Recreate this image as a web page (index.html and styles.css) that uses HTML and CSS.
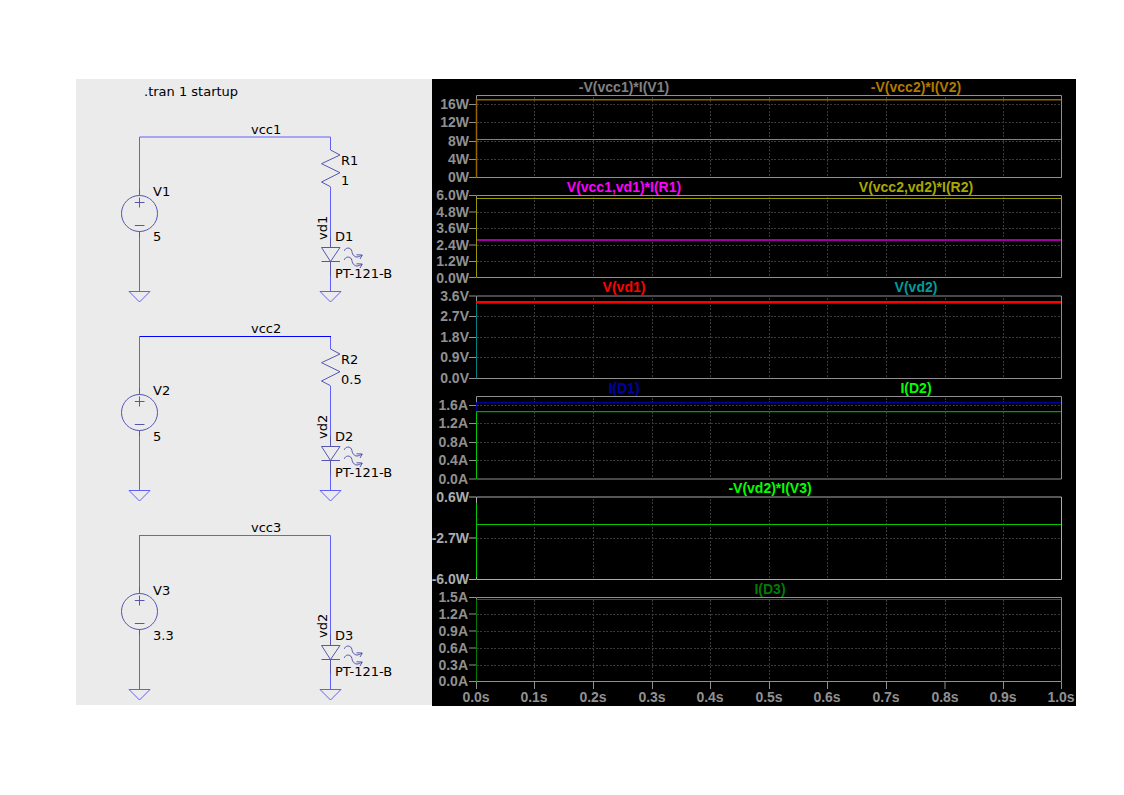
FILE: index.html
```html
<!DOCTYPE html>
<html lang="en">
<head>
<meta charset="utf-8">
<title>LED supply simulation</title>
<link rel="stylesheet" href="styles.css">
</head>
<body>
<main class="board">
  <section class="schematic" aria-label="Schematic">
    <svg class="drawing" viewBox="0 0 356 626">
      <defs>
        <g id="ground"><path class="wire" d="M-10.5 0H10.5L0 10.5Z"/></g>
        <g id="source">
          <path class="wire" d="M63.5 58V116.5M63.5 152.5V212.5"/>
          <circle class="part" cx="63.5" cy="134.5" r="18"/>
          <path class="part" d="M58.8 123.5H68.5M63.5 118.5V128.5M58.8 146.5H68.5"/>
          <use href="#ground" x="63.5" y="212.5"/>
          <path class="part" d="M63.5 110V116.5M63.5 152.5V158"/>
        </g>
        <g id="resistor"><path class="part" d="M254.5 71L264 76L245.5 84.7L264 93.7L245.5 103L254.5 107.7"/></g>
        <g id="ray">
          <path class="part" d="M268.3 171.8C269.5 168.4 274 168.2 275.4 171C276.4 173 275.8 174.4 277.5 176.2C279.5 178.8 282 178.4 286 176.2M280.5 175.8L286.3 176L284 180"/>
        </g>
        <g id="led">
          <path class="part" d="M245.5 168.5H264L254.5 182.5ZM245.5 182.5H264M254.5 158V168.5M254.5 182.5V197"/>
          <path class="wire" d="M254.5 197V212.5"/>
          <use href="#ground" x="254.5" y="212.5"/>
          <use href="#ray"/>
          <use href="#ray" y="9"/>
        </g>
      </defs>

      <text x="68" y="17">.tran 1 startup</text>

      <path class="wire" d="M63.5 58H254.5V71M254.5 108V158"/>
      <use href="#source"/><use href="#resistor"/><use href="#led"/>
      <text x="175" y="55">vcc1</text>
      <text x="77" y="117">V1</text>
      <text x="77" y="162">5</text>
      <text x="265" y="86">R1</text>
      <text x="265" y="106">1</text>
      <text x="259" y="162">D1</text>
      <text x="259" y="199">PT-121-B</text>
      <text transform="translate(251 161) rotate(-90)">vd1</text>

      <path class="wire" d="M254.5 257V270M254.5 307V357"/>
      <path class="wire strong" d="M63 257.5H255"/>
      <use href="#source" y="199"/><use href="#resistor" y="199"/><use href="#led" y="199"/>
      <text x="175" y="254">vcc2</text>
      <text x="77" y="316">V2</text>
      <text x="77" y="362">5</text>
      <text x="265" y="285">R2</text>
      <text x="265" y="305">0.5</text>
      <text x="259" y="362">D2</text>
      <text x="259" y="398">PT-121-B</text>
      <text transform="translate(251 360) rotate(-90)">vd2</text>

      <path class="wire" d="M63.5 457V456.5H254.5V556"/>
      <use href="#source" y="398"/><use href="#led" y="398"/>
      <text x="175" y="453">vcc3</text>
      <text x="77" y="516">V3</text>
      <text x="77" y="561">3.3</text>
      <text x="259" y="561">D3</text>
      <text x="259" y="597">PT-121-B</text>
      <text transform="translate(251 559) rotate(-90)">vd2</text>
    </svg>
  </section>

  <section class="plots" aria-label="Waveforms">
    <article class="plot">
      <header class="legend"><span class="gray">-V(vcc1)*I(V1)</span><span class="amber">-V(vcc2)*I(V2)</span></header>
      <svg class="drawing" viewBox="0 0 644 84">
        <path class="grid" d="M45 9.5H629M45 27.5H629M45 46.5H629M45 64.5H629"/>
        <path id="columns" class="grid" d="M102.5 2V82M161.5 2V82M220.5 2V82M278.5 2V82M337.5 2V82M395.5 2V82M454.5 2V82M513.5 2V82M571.5 2V82"/>
        <path class="frame" d="M44.5 .5H629.5V82.5H44.5ZM37 9.5H44M37 27.5H44M37 46.5H44M37 64.5H44M37 82.5H44"/>
        <path class="trace gray" d="M44.5 44.5H629"/>
        <path class="trace amber" d="M44.5 82V4.7H629"/>
        <g class="scale"><text x="37" y="14">16W</text><text x="37" y="32">12W</text><text x="37" y="51">8W</text><text x="37" y="69">4W</text><text x="37" y="87">0W</text></g>
      </svg>
    </article>

    <article class="plot">
      <header class="legend"><span class="magenta">V(vcc1,vd1)*I(R1)</span><span class="olive">V(vcc2,vd2)*I(R2)</span></header>
      <svg class="drawing" viewBox="0 0 644 84">
        <path class="grid" d="M45 17.5H629M45 33.5H629M45 50.5H629M45 66.5H629"/>
        <use href="#columns"/>
        <path class="frame" d="M44.5 .5H629.5V82.5H44.5ZM37 .5H44M37 17H44M37 33.5H44M37 50H44M37 66.5H44M37 82.5H44"/>
        <path class="trace magenta" d="M44.5 45H629"/>
        <path class="trace olive" d="M44.5 82V3.5H629"/>
        <g class="scale"><text x="37" y="5">6.0W</text><text x="37" y="22">4.8W</text><text x="37" y="38">3.6W</text><text x="37" y="55">2.4W</text><text x="37" y="71">1.2W</text><text x="37" y="88">0.0W</text></g>
      </svg>
    </article>

    <article class="plot">
      <header class="legend"><span class="red">V(vd1)</span><span class="teal">V(vd2)</span></header>
      <svg class="drawing" viewBox="0 0 644 85">
        <path class="grid" d="M45 21.5H629M45 42.5H629M45 62.5H629"/>
        <use href="#columns" y="1"/>
        <path class="frame" d="M44.5 1H629.5V83.5H44.5ZM37 1H44M37 21.5H44M37 42.5H44M37 62.5H44M37 83.5H44"/>
        <path class="trace teal" d="M44.5 83V8H629"/>
        <path class="trace red" d="M44 7H629"/>
        <g class="scale"><text x="37" y="6">3.6V</text><text x="37" y="26">2.7V</text><text x="37" y="47">1.8V</text><text x="37" y="67">0.9V</text><text x="37" y="88">0.0V</text></g>
      </svg>
    </article>

    <article class="plot">
      <header class="legend"><span class="blue">I(D1)</span><span class="lime">I(D2)</span></header>
      <svg class="drawing" viewBox="0 0 644 84">
        <path class="grid" d="M45 9.5H629M45 27.5H629M45 46.5H629M45 64.5H629"/>
        <use href="#columns"/>
        <path class="frame" d="M44.5 .5H629.5V83H44.5ZM37 9.5H44M37 27.5H44M37 46.5H44M37 64.5H44M37 83H44"/>
        <path class="trace blue" d="M44.5 16V6.5H629"/>
        <path class="trace green" d="M44.5 83V15.7H629"/>
        <g class="scale"><text x="36" y="14">1.6A</text><text x="36" y="32">1.2A</text><text x="36" y="51">0.8A</text><text x="36" y="69">0.4A</text><text x="36" y="88">0.0A</text></g>
      </svg>
    </article>

    <article class="plot bright">
      <header class="legend"><span class="lime">-V(vd2)*I(V3)</span></header>
      <svg class="drawing" viewBox="0 0 644 85">
        <path class="grid" d="M45 42.5H629"/>
        <use href="#columns" y="1"/>
        <path class="frame" d="M44.5 1H629.5V83.5H44.5ZM37 1H44M37 42H44M37 83.5H44"/>
        <path class="trace green" d="M44.5 81V7M44.5 28.5H629"/>
        <g class="scale"><text x="37" y="6">0.6W</text><text x="37" y="47">-2.7W</text><text x="37" y="88">-6.0W</text></g>
      </svg>
    </article>

    <article class="plot">
      <header class="legend"><span class="forest">I(D3)</span></header>
      <svg class="drawing" viewBox="0 0 644 109">
        <path class="grid" d="M45 17.5H629M45 34.5H629M45 51.5H629M45 68.5H629"/>
        <use href="#columns" y="1"/>
        <path class="frame" d="M44.5 .5H629.5V84.5H44.5ZM37 .5H44M37 17H44M37 34H44M37 51H44M37 68H44M37 84.5H44"/>
        <path class="frame" d="M44.5 85V92M102.5 85V92M161.5 85V92M220.5 85V92M278.5 85V92M337.5 85V92M395.5 85V92M454.5 85V92M513 85V92M571.5 85V92M629.5 85V92"/>
        <path class="trace forest" d="M44.5 84V2.5H629"/>
        <g class="scale"><text x="36" y="5">1.5A</text><text x="36" y="22">1.2A</text><text x="36" y="39">0.9A</text><text x="36" y="56">0.6A</text><text x="36" y="73">0.3A</text><text x="36" y="89">0.0A</text></g>
        <g class="time"><text x="44" y="105">0.0s</text><text x="102" y="105">0.1s</text><text x="161" y="105">0.2s</text><text x="220" y="105">0.3s</text><text x="278" y="105">0.4s</text><text x="337" y="105">0.5s</text><text x="395" y="105">0.6s</text><text x="454" y="105">0.7s</text><text x="513" y="105">0.8s</text><text x="571" y="105">0.9s</text><text x="629" y="105">1.0s</text></g>
      </svg>
    </article>
  </section>
</main>
</body>
</html>
```
FILE: styles.css
```css
body {
  margin: 0;
  background: #fff;
}

.board {
  display: grid;
  grid-template-columns: 356fr 644fr;
  align-items: start;
  padding: 79px 48px 79px 76px;
}

.schematic {
  background: #ebebeb;
}

.plots {
  background: #000;
}

.drawing {
  display: block;
  width: 100%;
  height: auto;
  overflow: visible;
  fill: none;
}

.schematic text {
  font-family: "DejaVu Sans", sans-serif;
  font-size: 13px;
  fill: #000;
}

.wire {
  stroke: #6060fa;
}

.strong {
  stroke: #0000ff;
}

.part {
  stroke: #5656b0;
}

.plot {
  --axis: #909090;
  font: bold 14px "Liberation Sans", Arial, sans-serif;
}

.bright {
  --axis: #acacac;
}

.legend {
  display: flex;
  line-height: 16px;
  padding: 0 14px 0 46px;
}

.legend span {
  flex: 1;
  text-align: center;
  color: var(--ink);
}

.scale,
.time {
  fill: var(--axis);
}

.scale {
  text-anchor: end;
}

.time {
  text-anchor: middle;
}

.frame {
  stroke: var(--axis);
}

.grid {
  stroke: #3a3a3a;
  stroke-dasharray: 2 1 2 2;
}

.trace {
  stroke: var(--line, var(--ink));
}

.gray { --ink: #808080; }
.amber { --ink: #b07a00; --line: #946400; }
.magenta { --ink: #ff00ff; --line: #a000a0; }
.olive { --ink: #a8a800; --line: #989800; }
.red { --ink: #ff0000; }
.teal { --ink: #009c9c; --line: #008080; }
.blue { --ink: #0000a8; --line: #000098; }
.lime { --ink: #00ff00; }
.green { --ink: #00c800; }
.forest { --ink: #007c00; }

.trace.amber {
  stroke-width: 1.5;
}

.trace.red,
.trace.magenta {
  stroke-width: 2;
}
```
